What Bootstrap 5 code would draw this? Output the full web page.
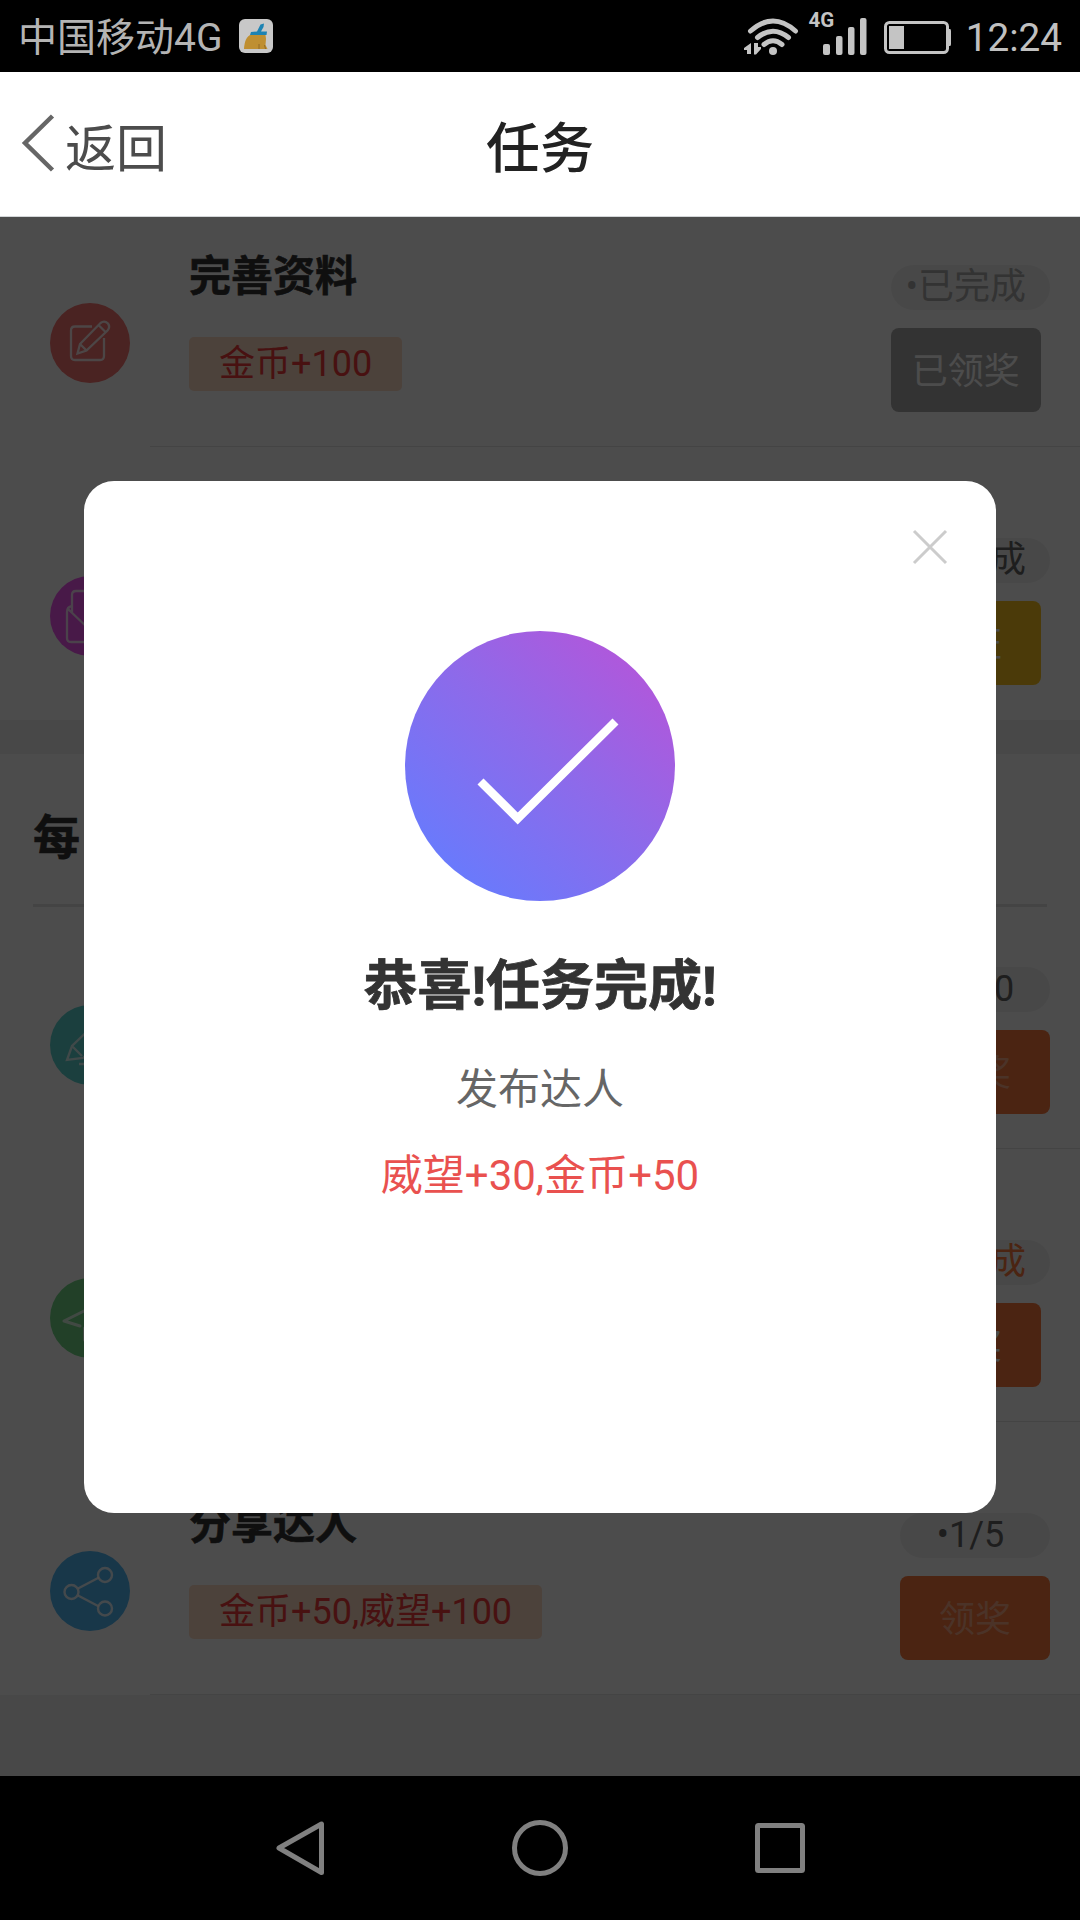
<!DOCTYPE html>
<html lang="zh-CN">
<head>
<meta charset="utf-8">
<meta name="viewport" content="width=device-width, initial-scale=1">
<title>任务</title>
<link href="https://cdn.jsdelivr.net/npm/bootstrap@5.3.0/dist/css/bootstrap.min.css" rel="stylesheet">
<style>
body{width:1080px;height:1920px;overflow:hidden;background:#000;font-family:Roboto,"Noto Sans CJK SC",sans-serif;font-size:36px;line-height:1}
svg{display:block;flex:none}
.statusbar{height:72px;padding:0 18px;color:#b4b4b4}
.carrier{font-size:39px;font-weight:400;line-height:72px;padding-top:4px}
.app-badge{margin-left:17px}
.clock{font-size:38.700px;line-height:72px;padding-top:3px;margin-left:15px;color:#c0c0c0}
.topbar{height:145px;background:#fff;border-bottom:1px solid #d3d6d8}
.topbar .side{width:480px}
.topbar .back{color:#4c4c4c;font-size:51px;padding-left:20px}
.topbar .back span{margin-left:9px;padding-top:11px}
.topbar .heading{flex:1;text-align:center;white-space:nowrap;font-size:54px;font-weight:500;color:#222;line-height:60px;padding-top:11px}
.screen{height:1559px;background:#f0f0f0}
.task{height:273px;background:#fff linear-gradient(#e4e4e4,#e4e4e4) right bottom/930px 1px no-repeat;padding:0 30px 1px 50px}
.task.first{height:230px}
.task.plain{background-image:none}
.task.after-title{height:242px}
.task-icon{width:80px;height:80px;margin-bottom:63px}
.task-main{margin:0 0 55px 59px}
.task-name{font-size:42px;font-weight:700;line-height:50px;color:#333;margin-bottom:35px;-webkit-text-stroke:.6px #333}
.reward{height:54px;line-height:55px;padding:0 30px;background:#fddcc5;color:#f03a3a;border-radius:5px}
.task-side{margin-bottom:34px;gap:18px}
.state{height:45px;min-width:150px;line-height:44px;padding:0 24px 0 15px;border-radius:23px;background:#f2f2f2;color:#666;text-align:center;white-space:nowrap}
.state.done{color:#aaa}
.state.ready{color:#fa783c}
.act{width:150px;height:84px;padding:0;border:0;border-radius:8px;font-size:36px;line-height:88px;color:#fff;background:#fa783c}
.act.got{background:#aaa}
.act.verify{background:#fac41e}
.act.off{color:#fbab88}
.group-title{margin-top:34px;height:153px;background:#fff;padding:0 33px}
.group-title h2{font-size:47px;font-weight:700;line-height:60px;margin:0;padding-top:54px;height:150px;color:#333;-webkit-text-stroke:.6px #333}
.group-title .rule{height:3px;background:#e4e4e4}
.shade{inset:0;background:rgba(0,0,0,.7)}
.dialog{width:912px;height:1032px;border-radius:30px}
.dialog .close-x{margin:48px 48px 0 0}
.dialog .tick{margin-top:66px}
.dialog h1{font-size:54px;font-weight:700;line-height:60px;margin:56px 0 0;color:#333;-webkit-text-stroke:.8px #333}
.dialog .t1{font-size:42px;line-height:50px;margin:48px 0 0;color:#666}
.dialog .t2{font-size:42px;line-height:50px;margin:36px 0 0;color:#e9514f}
.keys{height:144px}
</style>
</head>
<body class="d-flex flex-column">
<div class="statusbar d-flex align-items-center flex-shrink-0">
  <span class="carrier">中国移动4G</span>
  <svg class="app-badge" width="34" height="34" viewBox="0 0 34 34"><rect width="34" height="34" rx="6" fill="#c8c8c8"/><path d="M21.500 5.500 25 4.500 24.500 8 22 12.500 28 12.500 27.500 16H11l1-3 6-.500z" fill="#1d83b3"/><path d="M11 16h15.500l.5 4-.500 6 2 4H5c.500-5 1-11 6-14z" fill="#bf8f31"/><path d="M20 30v-5M26.500 30l-1-4" stroke="#936b25"/></svg>
  <svg class="ms-auto" width="207" height="72" viewBox="744 0 207 72" fill="none" stroke="#c4c4c4">
    <g stroke-width="5" stroke-linecap="round"><path d="M750.500 31Q773 11 795.500 31"/><path d="M757.500 37.500Q773 25 788.500 37.500"/><path d="M764 44.500Q773 37 782 44.500"/></g>
    <g fill="#c4c4c4" stroke="none"><circle cx="773" cy="51" r="4"/><path d="M751 43v11h-4v-4h-3v-2zM754 43h4v4l3 0v2L756 54.500h-2z"/>
    <rect x="823" y="44" width="7" height="11" rx="2"/><rect x="836" y="36" width="6.500" height="19" rx="2"/><rect x="848" y="27" width="6.500" height="28" rx="2"/><rect x="860" y="18" width="6.500" height="37" rx="2"/>
    <text x="808.500" y="27" font-family="Roboto" font-weight="700" font-size="20.500">4G</text>
    <rect x="889" y="26" width="15" height="23"/><path d="M948 29h2q1 0 1 2v13q0 2-1 2h-2z"/></g>
    <rect x="885.500" y="22.500" width="62" height="30" rx="4" stroke-width="3"/>
  </svg>
  <span class="clock">12:24</span>
</div>

<nav class="topbar d-flex align-items-center flex-shrink-0">
  <a class="side back d-flex align-items-center text-decoration-none" href="#">
    <svg width="36" height="60" viewBox="0 0 36 60" fill="none" stroke="#666" stroke-width="4.500"><path d="M32.500 2 5 29l27.500 27"/></svg>
    <span>返回</span>
  </a>
  <div class="heading">任务</div>
  <div class="side"></div>
</nav>

<main class="screen position-relative overflow-hidden flex-shrink-0">
  <div class="task first d-flex align-items-end">
    <svg class="task-icon" viewBox="0 0 80 80" fill="none" stroke="#fff" stroke-opacity=".85" stroke-width="2.300"><circle cx="40" cy="40" r="40" fill="#f87572" stroke="none"/><path d="M42 23.500H25q-4 0-4 4V53q0 4 4 4h25q4 0 4-4V35"/><path d="M27.500 50.500 30 41 50.500 20q4-3 7.500.500 2.500 3.500-.500 7L36.500 47.500zM30 41l6.500 6.500M48.500 22l7 7"/></svg>
    <div class="task-main d-flex flex-column align-items-start"><div class="task-name">完善资料</div><div class="reward">金币+100</div></div>
    <div class="task-side ms-auto d-flex flex-column align-items-start"><span class="state done">•已完成</span><button class="act got">已领奖</button></div>
  </div>
  <div class="task plain d-flex align-items-end">
    <svg class="task-icon" viewBox="0 0 80 80" fill="none" stroke="#fff" stroke-opacity=".8" stroke-width="2.300"><circle cx="40" cy="40" r="40" fill="#f055f0" stroke="none"/><path d="M22 37V19q0-4 4-4h28q4 0 4 4v18M22 30q-5 1-5 6v26q0 4 4 4h38q4 0 4-4V36q0-5-5-6M18 33l22 21 22-21"/></svg>
    <div class="task-main d-flex flex-column align-items-start"><div class="task-name">验证邮箱</div><div class="reward">金币+100</div></div>
    <div class="task-side ms-auto d-flex flex-column align-items-start"><span class="state">•未完成</span><button class="act verify">验证</button></div>
  </div>
  <div class="group-title"><h2>每日任务</h2><div class="rule"></div></div>
  <div class="task after-title d-flex align-items-end">
    <svg class="task-icon" viewBox="0 0 80 80" fill="none" stroke="#fff" stroke-opacity=".75" stroke-width="2.300"><circle cx="40" cy="40" r="40" fill="#5dd2cf" stroke="none"/><path d="M17 55l5-14 26-25 11 11-26 26zM22 41l10 10M29 59h30"/></svg>
    <div class="task-main d-flex flex-column align-items-start"><div class="task-name">评论达人</div><div class="reward">金币+50</div></div>
    <div class="task-side ms-auto d-flex flex-column align-items-start"><span class="state">•0/10</span><button class="act off">领奖</button></div>
  </div>
  <div class="task d-flex align-items-end">
    <svg class="task-icon" viewBox="0 0 80 80" fill="none" stroke="#fff" stroke-opacity=".75" stroke-width="3" stroke-linecap="round" stroke-linejoin="round"><circle cx="40" cy="40" r="40" fill="#72d886" stroke="none"/><path d="M30 48 14 43l50-25-10 40-12-7M34.500 50v12"/></svg>
    <div class="task-main d-flex flex-column align-items-start"><div class="task-name">发布达人</div><div class="reward">威望+30,金币+50</div></div>
    <div class="task-side ms-auto d-flex flex-column align-items-start"><span class="state ready">•已完成</span><button class="act">领奖</button></div>
  </div>
  <div class="task d-flex align-items-end">
    <svg class="task-icon" viewBox="0 0 80 80" fill="none" stroke="#fff" stroke-opacity=".85" stroke-width="2.400"><circle cx="40" cy="40" r="40" fill="#52b8f5" stroke="none"/><circle cx="21.500" cy="41" r="7"/><circle cx="55" cy="24" r="7"/><circle cx="55" cy="57.500" r="7"/><path d="M28 37.500 49 26.500M28 44.500 49 55.500"/></svg>
    <div class="task-main d-flex flex-column align-items-start"><div class="task-name">分享达人</div><div class="reward">金币+50,威望+100</div></div>
    <div class="task-side ms-auto d-flex flex-column align-items-start"><span class="state">•1/5</span><button class="act off">领奖</button></div>
  </div>
  <div class="shade position-absolute d-flex align-items-center justify-content-center">
    <div class="dialog bg-white d-flex flex-column align-items-center">
      <svg class="close-x align-self-end" width="36" height="36" viewBox="0 0 36 36" stroke="#ccc" stroke-width="3"><path d="M2 2l32 32M34 2 2 34"/></svg>
      <svg class="tick" width="270" height="270" viewBox="0 0 270 270"><defs><linearGradient id="violet" x1=".14" y1=".9" x2=".88" y2=".08"><stop offset="0" stop-color="#677bfd"/><stop offset=".55" stop-color="#8f69e9"/><stop offset="1" stop-color="#b356da"/></linearGradient></defs><circle cx="135" cy="135" r="135" fill="url(#violet)"/><path d="M75.500 150.500 112.700 187.500 210.500 90.500" fill="none" stroke="#fff" stroke-width="8.500"/></svg>
      <h1>恭喜!任务完成!</h1>
      <p class="t1">发布达人</p>
      <p class="t2">威望+30,金币+50</p>
    </div>
  </div>
</main>

<footer class="keys flex-shrink-0">
  <svg width="1080" height="144" fill="none" stroke="#808080" stroke-width="5" stroke-linejoin="round"><path d="M321.500 48v48.500L279 72z"/><circle cx="540" cy="72" r="25.500"/><rect x="757.500" y="49.500" width="45" height="45" rx="1"/></svg>
</footer>
<script src="https://cdn.jsdelivr.net/npm/bootstrap@5.3.0/dist/js/bootstrap.bundle.min.js"></script>
</body>
</html>
